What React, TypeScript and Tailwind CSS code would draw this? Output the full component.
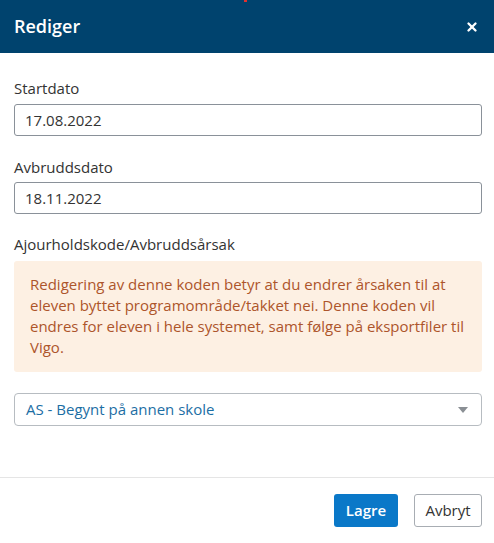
import { X } from 'lucide-react';

export default function App() {
  return (
    <div className="w-[494px] h-[543px] bg-white flex flex-col text-[#333]" style={{ fontFamily: '"Open Sans", sans-serif' }}>
      <div className="h-[53px] bg-[#00436e] flex items-center justify-between pl-[14px] pr-[15px] relative">
        <div className="absolute left-[244px] top-0 w-[3px] h-[2px] bg-[#e0312f]" />
        <h1 className="text-white text-[18px] font-semibold">Rediger</h1>
        <X className="w-[14px] h-[14px] text-white" strokeWidth={4} />
      </div>
      <div className="flex-1 pl-[14px] pr-[12px] pt-[24px]">
        <label className="block text-[15px] leading-[22px] mb-[5px]">Startdato</label>
        <div className="h-[32px] border border-[#8a9199] rounded-[3px] flex items-center px-[10px] text-[15px]">17.08.2022</div>
        <label className="block text-[15px] leading-[22px] mt-[20px] mb-[4px]">Avbruddsdato</label>
        <div className="h-[32px] border border-[#8a9199] rounded-[3px] flex items-center px-[10px] text-[15px]">18.11.2022</div>
        <label className="block text-[15px] leading-[22px] mt-[19px] mb-[6px]">Ajourholdskode/Avbruddsårsak</label>
        <div className="bg-[#fdf0e3] rounded-[3px] pl-4 pr-3 pt-[13px] pb-[14px] text-[15px] leading-[21px] text-[#ad552b]">
          Redigering av denne koden betyr at du endrer årsaken til at eleven byttet programområde/takket nei. Denne koden vil endres for eleven i hele systemet, samt følge på eksportfiler til Vigo.
        </div>
        <div className="mt-[21px] h-[33px] border border-[#b7bcc1] rounded-[4px] flex items-center justify-between pl-[11px] pr-[13px] text-[15px] text-[#1c6ea4]">
          <span>AS - Begynt på annen skole</span>
          <svg width="10" height="6" viewBox="0 0 10 6"><path d="M0 0h10L5 6z" fill="#8a8f94" /></svg>
        </div>
      </div>
      <div className="border-t border-[#e5e5e5] h-[66px] flex items-center justify-end gap-4 pr-[12px]">
        <button className="h-[33px] w-[64px] bg-[#0a78c8] text-white rounded-[3px] text-[15px] font-semibold">Lagre</button>
        <button className="h-[33px] w-[68px] bg-white border border-[#a8adb3] rounded-[3px] text-[15px] text-[#333]">Avbryt</button>
      </div>
    </div>
  );
}
